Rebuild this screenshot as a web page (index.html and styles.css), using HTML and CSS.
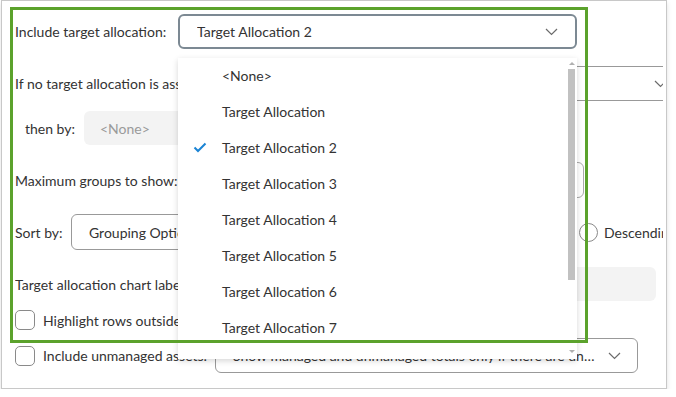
FILE: index.html
```html
<!DOCTYPE html>
<html lang="en">
<head>
    <meta charset="UTF-8">
    <meta name="viewport" content="width=device-width, initial-scale=1.0">
    <title>Target Allocation Settings</title>
    <link rel="stylesheet" href="styles.css">
</head>
<body>
    <div class="panel">
        <div class="form">
            <!-- Target allocation -->
            <div class="row row-1">
                <label class="label label-target">Include target allocation:</label>
                <div class="select select-active select-target">
                    <span class="select-text">Target Allocation 2</span>
                    <svg class="chevron" width="13" height="8" viewBox="0 0 13 8"><polyline points="1,1 6.5,6.5 12,1" fill="none" stroke="#6b6b6b" stroke-width="1.2"/></svg>
                </div>
            </div>

            <div class="row row-2">
                <label class="label label-fallback">If no target allocation is assigned, group by:</label>
                <div class="select select-fallback">
                    <span class="select-text">Asset Class</span>
                    <svg class="chevron" width="13" height="8" viewBox="0 0 13 8"><polyline points="1,1 6.5,6.5 12,1" fill="none" stroke="#6b6b6b" stroke-width="1.2"/></svg>
                </div>
            </div>

            <div class="row row-3">
                <label class="label label-then">then by:</label>
                <div class="box box-disabled box-then">&lt;None&gt;</div>
            </div>

            <div class="row row-4">
                <label class="label label-max">Maximum groups to show:</label>
                <div class="box box-input box-max">10</div>
            </div>

            <div class="row row-5">
                <label class="label label-sort">Sort by:</label>
                <div class="select select-sort">
                    <span class="select-text">Grouping Option</span>
                    <svg class="chevron" width="13" height="8" viewBox="0 0 13 8"><polyline points="1,1 6.5,6.5 12,1" fill="none" stroke="#6b6b6b" stroke-width="1.2"/></svg>
                </div>
                <div class="radios">
                    <div class="radio"><span class="radio-dot"></span>Ascending</div>
                    <div class="radio"><span class="radio-dot"></span>Descending</div>
                </div>
            </div>

            <div class="row row-6">
                <label class="label label-chart">Target allocation chart labels:</label>
                <div class="box box-disabled box-chart"></div>
            </div>

            <div class="row row-7">
                <span class="checkbox"></span>
                <label class="label">Highlight rows outside target range</label>
            </div>

            <div class="row row-8">
                <span class="checkbox"></span>
                <label class="label label-unmanaged">Include unmanaged assets:</label>
                <div class="select select-unmanaged">
                    <span class="select-text">Show managed and unmanaged totals only if there are unmanaged assets</span>
                    <svg class="chevron" width="13" height="8" viewBox="0 0 13 8"><polyline points="1,1 6.5,6.5 12,1" fill="none" stroke="#6b6b6b" stroke-width="1.2"/></svg>
                </div>
            </div>
        </div>

        <!-- Open dropdown -->
        <div class="dropdown">
            <ul class="options">
                <li class="option"><span class="check"></span>&lt;None&gt;</li>
                <li class="option"><span class="check"></span>Target Allocation</li>
                <li class="option selected">
                    <span class="check"><svg width="14" height="11" viewBox="0 0 14 11"><polyline points="1.5,5.5 5,9 12.5,1.5" fill="none" stroke="#1b84d4" stroke-width="2"/></svg></span>Target Allocation 2
                </li>
                <li class="option"><span class="check"></span>Target Allocation 3</li>
                <li class="option"><span class="check"></span>Target Allocation 4</li>
                <li class="option"><span class="check"></span>Target Allocation 5</li>
                <li class="option"><span class="check"></span>Target Allocation 6</li>
                <li class="option"><span class="check"></span>Target Allocation 7</li>
                <li class="option"><span class="check"></span>Target Allocation 8</li>
            </ul>
            <div class="scrollbar">
                <span class="arrow arrow-up"></span>
                <span class="thumb"></span>
                <span class="arrow arrow-down"></span>
            </div>
        </div>

        <!-- Highlight frame -->
        <div class="highlight"></div>
    </div>
</body>
</html>
```

FILE: styles.css
```css
/* Global Styles */
body {
    margin: 0;
    padding: 0;
    background-color: #ffffff;
    font-family: 'Lato', 'Liberation Sans', Arial, sans-serif;
    font-size: 14px;
    color: #333333;
}

/* Panel */
.panel {
    position: relative;
    box-sizing: border-box;
    width: 666px;
    height: 389px;
    margin-left: 1px;
    padding: 13px 3px 0 13px;
    border: 1px solid #c8c8c8;
    background-color: #ffffff;
    box-shadow: 0 3px 5px rgba(0, 0, 0, 0.12);
}

.form {
    overflow: hidden;
    height: 360px;
}

/* Rows */
.row {
    display: flex;
    align-items: center;
    white-space: nowrap;
}

.row-1 { height: 35px; }
.row-2 { height: 35px; margin-top: 17px; }
.row-3 { height: 34px; margin-top: 10px; padding-left: 10px; }
.row-4 { height: 36px; margin-top: 17px; }
.row-5 { height: 36px; margin-top: 16px; }
.row-6 { height: 34px; margin-top: 17px; }
.row-7 { height: 20px; margin-top: 9px; }
.row-8 { height: 35px; margin-top: 8px; }

.label {
    flex: none;
}

.label-target { width: 163px; }
.label-fallback { width: 385px; }
.label-then { width: 59px; }
.label-max { width: 185px; }
.label-sort { width: 56px; }
.label-chart { width: 205px; }
.label-unmanaged { width: 172px; }

/* Select boxes */
.select {
    flex: none;
    box-sizing: border-box;
    height: 100%;
    display: flex;
    align-items: center;
    justify-content: space-between;
    padding: 0 16px 0 17px;
    border: 1px solid #999999;
    border-radius: 6px;
    background-color: #ffffff;
}

.select-text {
    overflow: hidden;
    text-overflow: ellipsis;
    white-space: nowrap;
}

.select-active {
    border: 2px solid #7c8993;
    padding-left: 17px;
    padding-right: 17px;
}

.chevron {
    flex: none;
    margin-left: 12px;
}

.select-target { width: 399px; }
.select-fallback { width: 284px; }
.select-sort { width: 300px; }
.select-unmanaged { width: 423px; }

/* Plain boxes */
.box {
    flex: none;
    box-sizing: border-box;
    height: 100%;
    display: flex;
    align-items: center;
    padding-left: 16px;
    border-radius: 6px;
}

.box-disabled {
    background-color: #f3f3f3;
    color: #9a9a9a;
}

.box-input {
    border: 1px solid #aaaaaa;
}

.box-then { width: 400px; }
.box-max { width: 384px; }
.box-chart { width: 436px; }

/* Radios */
.radios {
    display: flex;
    margin-left: 69px;
}

.radio {
    display: flex;
    align-items: center;
    width: 139px;
}

.radio-dot {
    box-sizing: border-box;
    width: 19px;
    height: 19px;
    margin-right: 6px;
    border: 1px solid #8a8a8a;
    border-radius: 50%;
}

/* Checkboxes */
.checkbox {
    flex: none;
    box-sizing: border-box;
    width: 20px;
    height: 20px;
    margin-right: 8px;
    border: 1px solid #8a8a8a;
    border-radius: 5px;
}

/* Dropdown overlay */
.dropdown {
    position: absolute;
    top: 57px;
    left: 176px;
    width: 399px;
    height: 301px;
    overflow: hidden;
    background-color: #ffffff;
    box-shadow: 0 2px 6px rgba(0, 0, 0, 0.16);
    z-index: 2;
}

.options {
    list-style: none;
    margin: -1px 0 0 0;
    padding: 0;
}

.option {
    display: flex;
    align-items: center;
    height: 36px;
    white-space: nowrap;
}

.check {
    flex: none;
    display: flex;
    align-items: center;
    width: 29px;
    padding-left: 15px;
}

.scrollbar {
    position: absolute;
    top: 0;
    right: 0;
    width: 9px;
    height: 100%;
}

.thumb {
    position: absolute;
    top: 11px;
    left: 0;
    width: 7px;
    height: 211px;
    background-color: #c1c1c1;
}

.arrow {
    position: absolute;
    left: 1px;
    width: 0;
    height: 0;
    border-left: 3px solid transparent;
    border-right: 3px solid transparent;
}

.arrow-up {
    top: 4px;
    border-bottom: 3px solid #b0b0b0;
}

.arrow-down {
    top: 292px;
    border-top: 3px solid #b0b0b0;
}

/* Highlight frame */
.highlight {
    position: absolute;
    top: 6px;
    left: 8px;
    box-sizing: border-box;
    width: 578px;
    height: 336px;
    border: 3px solid #5ba22c;
    z-index: 3;
}
```
